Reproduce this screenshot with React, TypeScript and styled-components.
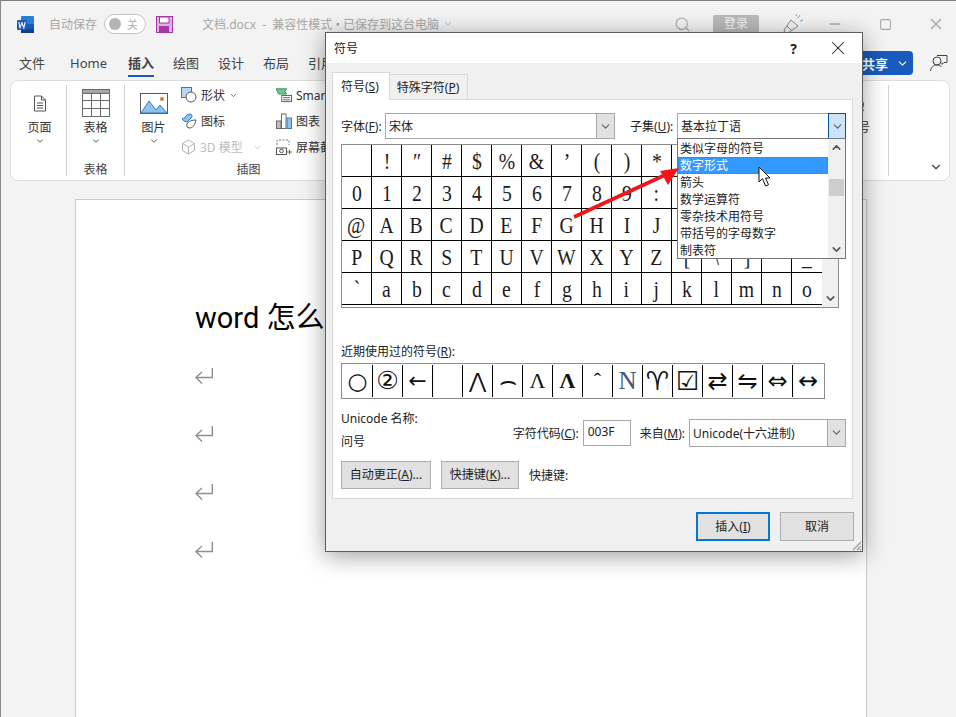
import styled, { createGlobalStyle } from 'styled-components';
import { ChevronDown, ChevronUp, Minus, Search, Square, X } from 'lucide-react';

const UI_FONT = `"Noto Sans", "Noto Sans CJK SC", sans-serif`;
const SERIF = `"Liberation Serif", "Noto Sans CJK SC", serif`;
const SYMBOL = `"DejaVu Sans", "Noto Sans CJK SC", sans-serif`;

const GlobalStyle = createGlobalStyle`
  html, body {
    margin: 0;
    padding: 0;
    background: #f3f3f3;
  }
  * {
    box-sizing: border-box;
  }
`;

// the cells under the open subset list stay empty, the list covers them anyway
const symbolRows = [
  ['', '!', '″', '#', '$', '%', '&', '’', '(', ')', '*', '', '', '', '', ''],
  ['0', '1', '2', '3', '4', '5', '6', '7', '8', '9', ':', '', '', '', '', ''],
  ['@', 'A', 'B', 'C', 'D', 'E', 'F', 'G', 'H', 'I', 'J', '', '', '', '', ''],
  ['P', 'Q', 'R', 'S', 'T', 'U', 'V', 'W', 'X', 'Y', 'Z', '[', '\\', ']', '', '_'],
  ['`', 'a', 'b', 'c', 'd', 'e', 'f', 'g', 'h', 'i', 'j', 'k', 'l', 'm', 'n', 'o'],
];

const recentSymbols = [
  { ch: '○', size: 23 },
  { ch: '②', size: 25 },
  { ch: '←', size: 22 },
  { ch: '', size: 20 },
  { ch: '⋀', size: 21 },
  { ch: '⌢', size: 28 },
  { ch: 'Λ', size: 22, serif: true },
  { ch: 'Λ', size: 22, serif: true, bold: true },
  { ch: 'ˆ', size: 22, serif: true },
  { ch: 'N', size: 25, serif: true, tint: '#3d5a78' },
  { ch: '♈', size: 26 },
  { ch: '☑', size: 26, bold: true },
  { ch: '⇄', size: 24 },
  { ch: '⇋', size: 24 },
  { ch: '⇔', size: 24 },
  { ch: '↔', size: 24 },
];

const subsetItems = ['类似字母的符号', '数字形式', '箭头', '数学运算符', '零杂技术用符号', '带括号的字母数字', '制表符'];

function WordLogo() {
  return (
    <svg width="17" height="17" viewBox="0 0 17 17">
      <rect x="4" y="0" width="13" height="17" rx="1" fill="#2b7cd3" />
      <rect x="4" y="8" width="13" height="4.5" fill="#185abd" />
      <rect x="4" y="12.5" width="13" height="4.5" fill="#103f91" />
      <rect x="0" y="4" width="10" height="10" rx="1" fill="#185abd" />
      <path d="M1.8 6l1.2 5.6L4.9 6.8l1.9 4.8L8.2 6" fill="none" stroke="#fff" strokeWidth="1.1" />
    </svg>
  );
}

function SaveIcon() {
  return (
    <svg width="17" height="17" viewBox="0 0 17 17">
      <rect x="0.5" y="0.5" width="16" height="16" fill="#d9b3dc" stroke="#a437aa" />
      <rect x="3.5" y="1" width="9.5" height="6" fill="#fff" stroke="#a437aa" />
      <rect x="3" y="10" width="10" height="6.5" fill="#a437aa" />
    </svg>
  );
}

function PenIcon() {
  return (
    <svg width="24" height="24" viewBox="0 0 24 24" fill="none" stroke="#8a8a8a">
      <path d="M4 21l-1-3 7-10 7 6-10 7z" />
      <path d="M6 14l5 5" />
      <path d="M17 6l2-3M19 9l3-1M15 4l.5-2" stroke="#6aa5d8" />
    </svg>
  );
}

function CommentIcon() {
  return (
    <svg width="20" height="20" viewBox="0 0 20 20" fill="none" stroke="#444" strokeWidth="1">
      <circle cx="8" cy="8" r="4" />
      <path d="M1.5 18c.5-4 3-6 6.5-6 2 0 3.5.7 4.5 2" />
      <path d="M8 2.5h10v7h-3l-2 2V9.5" />
    </svg>
  );
}

function PageIcon() {
  return (
    <svg width="14" height="17" viewBox="0 0 14 17" fill="none" stroke="#555">
      <path d="M1.5 1h7l4 4v11h-11z" fill="#fff" />
      <path d="M8.5 1v4h4M4 8h6M4 10.500h6M4 13h6" />
    </svg>
  );
}

function TableIcon() {
  return (
    <svg width="28" height="28" viewBox="0 0 28 28" fill="none" stroke="#6a6a6a">
      <rect x="0.5" y="0.5" width="27" height="27" fill="#fff" />
      <rect x="0.5" y="0.5" width="27" height="4" fill="#a6a6a6" />
      <path d="M9.500 4v23M18.500 4v23M0 11.500h28M0 19.500h28" />
    </svg>
  );
}

function PictureIcon() {
  return (
    <svg width="28" height="21" viewBox="0 0 28 21">
      <rect x="0.5" y="0.5" width="27" height="20" fill="#fff" stroke="#5a5a5a" />
      <path d="M1 20l8-12 7 9 4-5 7 8z" fill="#8fc3ea" stroke="#2f7fc4" />
      <circle cx="22" cy="6" r="2" fill="#e97b1f" />
    </svg>
  );
}

function ShapesIcon() {
  return (
    <svg width="16" height="16" viewBox="0 0 16 16" fill="none">
      <rect x="0.5" y="0.5" width="10" height="10" fill="#b7d7f2" stroke="#2f7fc4" />
      <circle cx="10" cy="10" r="5" fill="#fff" stroke="#555" />
    </svg>
  );
}

function IconsIcon() {
  return (
    <svg width="16" height="16" viewBox="0 0 16 16" fill="none">
      <path d="M1 6c1-1 2-1 3-1 0-2 2-4 5-4 2 0 2 2 2 3l-2 2-3 3-3-1z" fill="#8fc3ea" stroke="#2f7fc4" />
      <path d="M6 14c-1-4 2-7 9-7-1 5-3 8-7 8z" fill="#fff" stroke="#555" />
    </svg>
  );
}

function CubeIcon() {
  return (
    <svg width="15" height="16" viewBox="0 0 15 16" fill="none" stroke="#b5b5b5">
      <path d="M7.500 1l6 3.500v7l-6 3.500-6-3.500v-7z" />
      <path d="M1.500 4.500l6 3.500 6-3.500M7.500 8v7" />
    </svg>
  );
}

function SmartArtIcon() {
  return (
    <svg width="16" height="16" viewBox="0 0 18 16" fill="none">
      <path d="M0 1h12l-2 3 2 3H3z" fill="#72c28d" stroke="#2e8b57" />
      <rect x="6.500" y="8.500" width="11" height="7" fill="#fff" stroke="#555" />
      <path d="M8 11h8M8 13.500h8" stroke="#555" />
    </svg>
  );
}

function ChartIcon() {
  return (
    <svg width="16" height="16" viewBox="0 0 16 16">
      <rect x="0.5" y="8" width="4.500" height="7.500" fill="#bdbdbd" stroke="#6a6a6a" />
      <rect x="5.500" y="1" width="4.500" height="14.500" fill="#fff" stroke="#6a6a6a" />
      <rect x="11" y="5" width="4.500" height="10.500" fill="#8fc3ea" stroke="#2f7fc4" />
    </svg>
  );
}

function ScreenshotIcon() {
  return (
    <svg width="16" height="16" viewBox="0 0 16 16" fill="none">
      <path d="M1 6V1h12v5" stroke="#777" strokeDasharray="2 1.500" />
      <rect x="0.500" y="9" width="10" height="6.500" fill="#fff" stroke="#555" />
      <circle cx="5.500" cy="12" r="1.800" stroke="#555" />
      <path d="M13.500 10.500v5M11 13h5" stroke="#2e8b57" />
    </svg>
  );
}

function ReturnMark() {
  return (
    <ReturnSlot>
      <svg width="18" height="16" viewBox="0 0 18 16" fill="none" stroke="#8f8f8f" strokeWidth="1.400">
        <path d="M17.300 0v9.500H1.500" />
        <path d="M7 4L1 9.500 7 15.500" />
      </svg>
    </ReturnSlot>
  );
}

function MarkerArrow() {
  return (
    <svg width="112" height="56" viewBox="0 0 112 56">
      <path d="M1 54L92 12" stroke="#f5141a" strokeWidth="3.600" />
      <path d="M106 5L87 8l8 14z" fill="#f5141a" />
    </svg>
  );
}

function MouseCursor() {
  return (
    <svg width="14" height="22" viewBox="0 0 14 22">
      <path d="M1 1v15l3.500-3.500L7.500 20l3-1.300-3-6.700H12z" fill="#fff" stroke="#111" strokeWidth="1" />
    </svg>
  );
}

function ResizeGrip() {
  return (
    <svg width="12" height="12" viewBox="0 0 12 12" stroke="#a0a0a0" strokeWidth="1.400">
      <path d="M11 3l-8 8M11 7l-4 4M11 10l-1 1" />
    </svg>
  );
}

export default function App() {
  return (
    <>
      <GlobalStyle />
      <Screen>
        <TitleBar>
          <WordLogo />
          <FadedText $left={15}>自动保存</FadedText>
          <Toggle>
            <ToggleKnob />
            <ToggleText>关</ToggleText>
          </Toggle>
          <SaveSlot>
            <SaveIcon />
          </SaveSlot>
          <FadedText $left={29}>文档.docx&nbsp;&nbsp;-&nbsp;&nbsp;兼容性模式 • 已保存到这台电脑</FadedText>
          <ChevronDown size={10} color="#aaa" style={{ marginLeft: 4 }} />
          <TitleRight>
            <Search size={17} color="#b5b5b5" />
            <SignIn>登录</SignIn>
            <PenSlot>
              <PenIcon />
            </PenSlot>
            <WindowButtons>
              <Minus size={16} color="#aaa" />
              <Square size={13} color="#aaa" />
              <X size={18} color="#aaa" />
            </WindowButtons>
          </TitleRight>
        </TitleBar>

        <MenuBar>
          <MenuItem>文件</MenuItem>
          <MenuItem>Home</MenuItem>
          <MenuItem $active>插入</MenuItem>
          <MenuItem>绘图</MenuItem>
          <MenuItem>设计</MenuItem>
          <MenuItem>布局</MenuItem>
          <MenuItem>引用</MenuItem>
          <MenuRight>
            <ShareButton>
              共享 <ChevronDown size={13} color="#fff" />
            </ShareButton>
            <CommentIcon />
          </MenuRight>
        </MenuBar>

        <Ribbon>
          <RibbonGroup $width={56}>
            <GroupBody>
              <BigButton>
                <PageIcon />
                <span>页面</span>
                <ChevronDown size={10} color="#444" />
              </BigButton>
            </GroupBody>
          </RibbonGroup>
          <RibbonGroup $width={58}>
            <GroupBody>
              <BigButton>
                <TableIcon />
                <span>表格</span>
                <ChevronDown size={10} color="#444" />
              </BigButton>
            </GroupBody>
            <GroupLabel>表格</GroupLabel>
          </RibbonGroup>
          <RibbonGroup $width={260}>
            <GroupBody>
              <BigButton>
                <PictureIcon />
                <span>图片</span>
                <ChevronDown size={10} color="#444" />
              </BigButton>
              <ToolColumn $width={95}>
                <ToolRow>
                  <ShapesIcon />
                  形状 <ChevronDown size={9} color="#444" />
                </ToolRow>
                <ToolRow>
                  <IconsIcon />
                  图标
                </ToolRow>
                <ToolRow $disabled>
                  <CubeIcon />
                  3D 模型 <ChevronDown size={9} color="#bbb" style={{ marginLeft: 6 }} />
                </ToolRow>
              </ToolColumn>
              <ToolColumn $width={90}>
                <ToolRow>
                  <SmartArtIcon />
                  SmartArt
                </ToolRow>
                <ToolRow>
                  <ChartIcon />
                  图表
                </ToolRow>
                <ToolRow>
                  <ScreenshotIcon />
                  屏幕截图
                </ToolRow>
              </ToolColumn>
            </GroupBody>
            <GroupLabel $shift={12}>插图</GroupLabel>
          </RibbonGroup>
          <RibbonTail>
            <TailButton>
              <TailGlyph>Ω</TailGlyph>
              <span>符号</span>
              <ChevronDown size={10} color="#444" />
            </TailButton>
            <TailDivider />
            <Collapse>
              <ChevronDown size={14} color="#444" />
            </Collapse>
          </RibbonTail>
        </Ribbon>

        <Page>
          <Heading>word 怎么</Heading>
          <ReturnMark />
          <ReturnMark />
          <ReturnMark />
          <ReturnMark />
        </Page>

        <Dialog>
          <DialogTitle>
            <span>符号</span>
            <DialogActions>
              <HelpMark>?</HelpMark>
              <X size={22} color="#222" strokeWidth={1.1} />
            </DialogActions>
          </DialogTitle>
          <DialogBody>
            <Tabs>
              <Tab $active>
                符号(<U>S</U>)
              </Tab>
              <Tab>
                特殊字符(<U>P</U>)
              </Tab>
            </Tabs>
            <Panel>
              <FontRow>
                <FontLabel>
                  字体(<U>F</U>):
                </FontLabel>
                <Combo $width={230}>
                  <ComboText>宋体</ComboText>
                  <ComboButton>
                    <ChevronDown size={13} color="#606060" />
                  </ComboButton>
                </Combo>
                <SubsetLabel>
                  子集(<U>U</U>):
                </SubsetLabel>
                <Combo $width={169}>
                  <ComboText>基本拉丁语</ComboText>
                  <ComboButton $open>
                    <ChevronDown size={13} color="#606060" />
                  </ComboButton>
                  <SubsetList>
                    <SubsetOptions>
                      {subsetItems.map((item, i) => (
                        <SubsetOption key={item} $selected={i === 1}>
                          {item}
                        </SubsetOption>
                      ))}
                    </SubsetOptions>
                    <ListScroll>
                      <ChevronUp size={13} color="#555" strokeWidth={3} />
                      <ListThumb />
                      <ChevronDown size={13} color="#555" strokeWidth={3} />
                    </ListScroll>
                  </SubsetList>
                </Combo>
              </FontRow>

              <SymbolTable>
                <SymbolGrid>
                  {symbolRows.flat().map((ch, i) => (
                    <SymbolCell key={i} $lastCol={i % 16 === 15}>
                      <Glyph>{ch}</Glyph>
                    </SymbolCell>
                  ))}
                </SymbolGrid>
                <TableScroll>
                  <ChevronDown size={13} color="#555" strokeWidth={3} />
                </TableScroll>
              </SymbolTable>

              <RecentLabel>
                近期使用过的符号(<U>R</U>):
              </RecentLabel>
              <RecentRow>
                {recentSymbols.map((s, i) => (
                  <RecentCell
                    key={i}
                    $lastCol={i === 15}
                    $bold={!!s.bold}
                    $size={s.size}
                    $serif={!!s.serif}
                    $tint={s.tint}
                  >
                    {s.ch}
                  </RecentCell>
                ))}
              </RecentRow>

              <InfoRow>
                <InfoNames>
                  <span>Unicode 名称:</span>
                  <span>问号</span>
                </InfoNames>
                <CodeFields>
                  <FieldLabel>
                    字符代码(<U>C</U>):
                  </FieldLabel>
                  <CodeInput>003F</CodeInput>
                  <FromLabel>
                    来自(<U>M</U>):
                  </FromLabel>
                  <Combo $width={157} $height={28}>
                    <ComboText>Unicode(十六进制)</ComboText>
                    <ComboButton>
                      <ChevronDown size={13} color="#606060" />
                    </ComboButton>
                  </Combo>
                </CodeFields>
              </InfoRow>

              <ShortcutRow>
                <GrayButton $width={90}>
                  自动更正(<U>A</U>)...
                </GrayButton>
                <GrayButton $width={78}>
                  快捷键(<U>K</U>)...
                </GrayButton>
                <span>快捷键:</span>
              </ShortcutRow>
            </Panel>
            <DialogFooter>
              <GrayButton $width={74} $height={29} $primary>
                插入(<U>I</U>)
              </GrayButton>
              <GrayButton $width={74} $height={29}>
                取消
              </GrayButton>
            </DialogFooter>
          </DialogBody>
          <GripSlot>
            <ResizeGrip />
          </GripSlot>
        </Dialog>

        <ArrowSlot>
          <MarkerArrow />
        </ArrowSlot>
        <CursorSlot>
          <MouseCursor />
        </CursorSlot>
      </Screen>
    </>
  );
}

const Screen = styled.div`
  position: relative;
  width: 956px;
  height: 717px;
  overflow: hidden;
  background: #f3f3f3;
  border-top: 1px solid #7d7d7d;
  border-left: 1px solid #8a8a8a;
  font-family: ${UI_FONT};
  font-size: 12px;
  color: #333;
`;

const TitleBar = styled.div`
  display: flex;
  align-items: center;
  height: 47px;
  padding: 0 0 1px 16px;
`;

const FadedText = styled.span<{ $left: number }>`
  margin-left: ${({ $left }) => $left}px;
  color: #a8a8a8;
  font-size: 12px;
  white-space: nowrap;
`;

const Toggle = styled.div`
  display: flex;
  align-items: center;
  justify-content: space-between;
  width: 42px;
  height: 20px;
  margin-left: 7px;
  padding: 0 7px 0 4px;
  border: 1px solid #c4c4c4;
  border-radius: 10px;
  background: #fff;
`;

const ToggleKnob = styled.span`
  width: 12px;
  height: 12px;
  border-radius: 50%;
  background: #b4b4b4;
`;

const ToggleText = styled.span`
  color: #b0b0b0;
  font-size: 11px;
`;

const SaveSlot = styled.div`
  display: flex;
  margin-left: 10px;
`;

const TitleRight = styled.div`
  display: flex;
  align-items: center;
  margin-left: auto;
  padding-right: 11px;
`;

const SignIn = styled.div`
  width: 46px;
  height: 18px;
  margin-left: 22px;
  border-radius: 2px;
  background: #b9b9b9;
  color: #f4f4f4;
  font-size: 12px;
  line-height: 18px;
  text-align: center;
`;

const PenSlot = styled.div`
  display: flex;
  margin-left: 22px;
`;

const WindowButtons = styled.div`
  display: flex;
  align-items: center;
  justify-content: space-between;
  width: 118px;
  margin-left: 22px;
`;

const MenuBar = styled.div`
  display: flex;
  align-items: flex-start;
  height: 32px;
  padding: 6px 7px 0 18px;
`;

const MenuItem = styled.div<{ $active?: boolean }>`
  margin-right: 19px;
  padding-bottom: 2px;
  color: #444;
  font-size: 13px;
  font-weight: ${({ $active }) => ($active ? 700 : 400)};
  line-height: 19px;
  border-bottom: 2px solid ${({ $active }) => ($active ? '#185abd' : 'transparent')};

  &:first-child {
    margin-right: 25px;
  }
  &:nth-child(2) {
    margin-right: 21px;
  }
`;

const MenuRight = styled.div`
  display: flex;
  align-items: center;
  gap: 16px;
  margin-left: auto;
  margin-top: -3px;
`;

const ShareButton = styled.div`
  display: flex;
  align-items: center;
  justify-content: flex-end;
  gap: 8px;
  width: 80px;
  height: 24px;
  padding-right: 4px;
  border-radius: 4px;
  background: #185abd;
  color: #fff;
  font-size: 13px;
  font-weight: 700;
`;

const Ribbon = styled.div`
  display: flex;
  width: 940px;
  height: 101px;
  margin-left: 9px;
  border: 1px solid #dcdcdc;
  border-radius: 8px;
  background: #fff;
`;

const RibbonGroup = styled.div<{ $width: number }>`
  display: flex;
  flex-direction: column;
  width: ${({ $width }) => $width}px;
  margin: 4px 0;
  border-right: 1px solid #d2d2d2;
`;

const GroupBody = styled.div`
  display: flex;
  flex: 1;
`;

const GroupLabel = styled.div<{ $shift?: number }>`
  height: 13px;
  padding-right: ${({ $shift }) => $shift ?? 0}px;
  line-height: 14px;
  text-align: center;
  font-size: 12px;
  color: #444;
`;

const BigButton = styled.div`
  display: grid;
  grid-template-rows: 32px 16px 12px;
  justify-items: center;
  align-items: center;
  align-self: flex-start;
  flex: 0 0 56px;
  padding: 2px 0 0 1px;
  font-size: 12px;
  color: #333;
`;

const ToolColumn = styled.div<{ $width: number }>`
  display: flex;
  flex-direction: column;
  gap: 6px;
  width: ${({ $width }) => $width}px;
`;

const ToolRow = styled.div<{ $disabled?: boolean }>`
  display: flex;
  align-items: center;
  gap: 4px;
  height: 20px;
  font-size: 12px;
  white-space: nowrap;
  color: ${({ $disabled }) => ($disabled ? '#bcbcbc' : '#333')};
`;

const RibbonTail = styled.div`
  display: flex;
  margin-left: auto;
  margin-top: 4px;
  margin-bottom: 4px;
`;

const TailButton = styled.div`
  display: grid;
  grid-template-rows: 30px 16px 12px;
  justify-items: center;
  align-items: center;
  align-self: flex-start;
  width: 40px;
  padding-top: 4px;
  font-size: 12px;
  transform: translateX(-10px);
`;

const TailGlyph = styled.span`
  font-size: 17px;
`;

const TailDivider = styled.div`
  width: 1px;
  background: #d2d2d2;
`;

const Collapse = styled.div`
  display: flex;
  align-items: flex-end;
  width: 60px;
  padding: 0 0 2px 40px;
`;

const Page = styled.div`
  display: flex;
  flex-direction: column;
  align-items: flex-start;
  gap: 42px;
  width: 792px;
  height: 560px;
  margin: 18px 0 0 74px;
  padding: 99px 0 0 119px;
  background: #fff;
  border: 1px solid #c9c9c9;
`;

const Heading = styled.div`
  height: 38px;
  margin-bottom: -11px;
  color: #000;
  font-family: Roboto, "Noto Sans CJK SC", sans-serif;
  font-size: 29px;
  line-height: 38px;
  white-space: nowrap;
`;

const ReturnSlot = styled.div`
  display: flex;
`;

const Dialog = styled.div`
  position: absolute;
  left: 324px;
  top: 31px;
  display: flex;
  flex-direction: column;
  width: 538px;
  height: 520px;
  border: 1px solid #5c5c5c;
  background: #f0f0f0;
  box-shadow: 0 4px 22px rgba(0, 0, 0, 0.38);
  color: #222;
  font-size: 12px;
`;

const DialogTitle = styled.div`
  display: flex;
  align-items: center;
  justify-content: space-between;
  height: 30px;
  padding: 0 13px 0 8px;
  background: #fff;
  font-size: 12px;
`;

const DialogActions = styled.div`
  display: flex;
  align-items: center;
  gap: 30px;
`;

const HelpMark = styled.span`
  font-size: 14px;
  font-weight: 700;
`;

const DialogBody = styled.div`
  display: flex;
  flex-direction: column;
  flex: 1;
  padding: 9px 9px 0 6px;
`;

const Tabs = styled.div`
  display: flex;
  align-items: flex-end;
  height: 28px;
  margin-bottom: -1px;
`;

const Tab = styled.div<{ $active?: boolean }>`
  position: relative;
  z-index: ${({ $active }) => ($active ? 1 : 0)};
  height: ${({ $active }) => ($active ? 28 : 26)}px;
  padding: ${({ $active }) => ($active ? '0 10px 0 8px' : '0 8px 0 7px')};
  border: 1px solid #d9d9d9;
  border-left-width: ${({ $active }) => ($active ? 1 : 0)}px;
  border-bottom: ${({ $active }) => ($active ? 'none' : '1px solid #d9d9d9')};
  background: ${({ $active }) => ($active ? '#fff' : '#f0f0f0')};
  line-height: ${({ $active }) => ($active ? 28 : 25)}px;
  font-size: 12px;
  white-space: nowrap;
`;

const U = styled.span`
  text-decoration: underline;
  text-underline-offset: 1px;
`;

const Panel = styled.div`
  display: flex;
  flex-direction: column;
  height: 400px;
  width: 521px;
  padding: 13px 6px 0 8px;
  border: 1px solid #d9d9d9;
  background: #fff;
`;

const FontRow = styled.div`
  display: flex;
  align-items: center;
`;

const FieldLabel = styled.span`
  white-space: nowrap;
`;

const FontLabel = styled.span`
  flex: 0 0 44px;
  white-space: nowrap;
`;

const SubsetLabel = styled.span`
  flex: 0 0 47px;
  margin-left: 15px;
  white-space: nowrap;
`;

const FromLabel = styled.span`
  margin: 0 4px 0 9px;
  white-space: nowrap;
`;

const Combo = styled.div<{ $width: number; $height?: number }>`
  position: relative;
  display: flex;
  flex: 0 0 ${({ $width }) => $width}px;
  height: ${({ $height }) => $height ?? 26}px;
  border: 1px solid #a8a8a8;
  background: #fff;
`;

const ComboText = styled.div`
  flex: 1;
  align-self: center;
  padding-left: 3px;
  white-space: nowrap;
`;

const ComboButton = styled.div<{ $open?: boolean }>`
  display: flex;
  align-items: center;
  justify-content: center;
  width: 18px;
  margin: ${({ $open }) => ($open ? '-1px -1px -1px 0' : '0')};
  border: ${({ $open }) => ($open ? '1px solid #005499' : 'none')};
  border-left: 1px solid ${({ $open }) => ($open ? '#005499' : '#a8a8a8')};
  background: ${({ $open }) => ($open ? '#cce4f7' : '#e1e1e1')};
`;

const SubsetList = styled.div`
  position: absolute;
  z-index: 3;
  top: 100%;
  left: -1px;
  right: -1px;
  display: flex;
  height: 121px;
  border: 1px solid #767676;
  background: #fff;
`;

const SubsetOptions = styled.div`
  flex: 1;
  padding-top: 1px;
`;

const SubsetOption = styled.div<{ $selected?: boolean }>`
  height: 17px;
  padding-left: 2px;
  background: ${({ $selected }) => ($selected ? '#3399ff' : 'transparent')};
  outline: ${({ $selected }) => ($selected ? '1px dotted #b5651d' : 'none')};
  outline-offset: -1px;
  color: ${({ $selected }) => ($selected ? '#fff' : '#222')};
  line-height: 17px;
  white-space: nowrap;
`;

const ListScroll = styled.div`
  display: flex;
  flex-direction: column;
  align-items: center;
  justify-content: space-between;
  position: relative;
  width: 17px;
  padding: 2px 0;
  background: #f0f0f0;
`;

const ListThumb = styled.div`
  position: absolute;
  top: 40px;
  left: 1px;
  width: 15px;
  height: 17px;
  background: #cdcdcd;
`;

const SymbolTable = styled.div`
  display: flex;
  width: 498px;
  height: 164px;
  margin-top: 5px;
  border: 1px solid #8c8c8c;
`;

const SymbolGrid = styled.div`
  display: grid;
  grid-template-columns: repeat(16, 30px);
  grid-auto-rows: 32px;
  width: 480px;
  padding-bottom: 1px;
`;

const SymbolCell = styled.div<{ $lastCol: boolean }>`
  display: flex;
  align-items: center;
  justify-content: center;
  overflow: hidden;
  border-right: ${({ $lastCol }) => ($lastCol ? 'none' : '1px solid #000')};
  border-bottom: 1px solid #000;
`;

const Glyph = styled.span`
  display: inline-block;
  transform: scaleX(0.82);
  color: #1c1c1c;
  font-family: ${SERIF};
  font-size: 24px;
  line-height: 30px;
`;

const TableScroll = styled.div`
  display: flex;
  flex: 1;
  flex-direction: column;
  justify-content: flex-end;
  align-items: center;
  padding-bottom: 2px;
  background: #f0f0f0;
`;

const RecentLabel = styled.div`
  height: 17px;
  margin-top: 35px;
  line-height: 17px;
`;

const RecentRow = styled.div`
  display: flex;
  width: 484px;
  height: 36px;
  margin-top: 3px;
  padding: 1px;
  border: 1px solid #8c8c8c;
`;

const RecentCell = styled.div<{
  $lastCol: boolean;
  $bold: boolean;
  $size: number;
  $serif: boolean;
  $tint?: string;
}>`
  display: flex;
  align-items: center;
  justify-content: center;
  flex: 0 0 30px;
  overflow: hidden;
  border-right: ${({ $lastCol }) => ($lastCol ? 'none' : '1px solid #000')};
  color: ${({ $tint }) => $tint ?? '#111'};
  font-family: ${({ $serif }) => ($serif ? SERIF : SYMBOL)};
  font-size: ${({ $size }) => $size}px;
  font-weight: ${({ $bold }) => ($bold ? 700 : 400)};
  line-height: 32px;
`;

const InfoRow = styled.div`
  display: flex;
  justify-content: space-between;
  height: 51px;
  margin-top: 11px;
`;

const InfoNames = styled.div`
  display: flex;
  flex-direction: column;
  gap: 6px;
  line-height: 17px;
`;

const CodeFields = styled.div`
  display: flex;
  align-items: center;
  height: 36px;
  padding-top: 9px;
`;

const CodeInput = styled.div`
  width: 48px;
  height: 26px;
  margin-left: 4px;
  padding-left: 4px;
  border: 1px solid #a8a8a8;
  line-height: 22px;
`;

const ShortcutRow = styled.div`
  display: flex;
  align-items: center;
  gap: 10px;
`;

const GrayButton = styled.div<{ $width: number; $height?: number; $primary?: boolean }>`
  width: ${({ $width }) => $width}px;
  height: ${({ $height }) => $height ?? 28}px;
  border: ${({ $primary }) => ($primary ? '2px solid #0078d7' : '1px solid #adadad')};
  background: #e1e1e1;
  line-height: ${({ $height, $primary }) => ($height ?? 28) - ($primary ? 4 : 2)}px;
  text-align: center;
  white-space: nowrap;
`;

const DialogFooter = styled.div`
  display: flex;
  justify-content: flex-end;
  gap: 10px;
  margin: 13px -1px 0 0;
`;

const GripSlot = styled.div`
  position: absolute;
  right: 0;
  bottom: 0;
  display: flex;
`;

const ArrowSlot = styled.div`
  position: absolute;
  z-index: 5;
  left: 572px;
  top: 162px;
  display: flex;
`;

const CursorSlot = styled.div`
  position: absolute;
  z-index: 6;
  left: 757px;
  top: 165px;
  display: flex;
`;
